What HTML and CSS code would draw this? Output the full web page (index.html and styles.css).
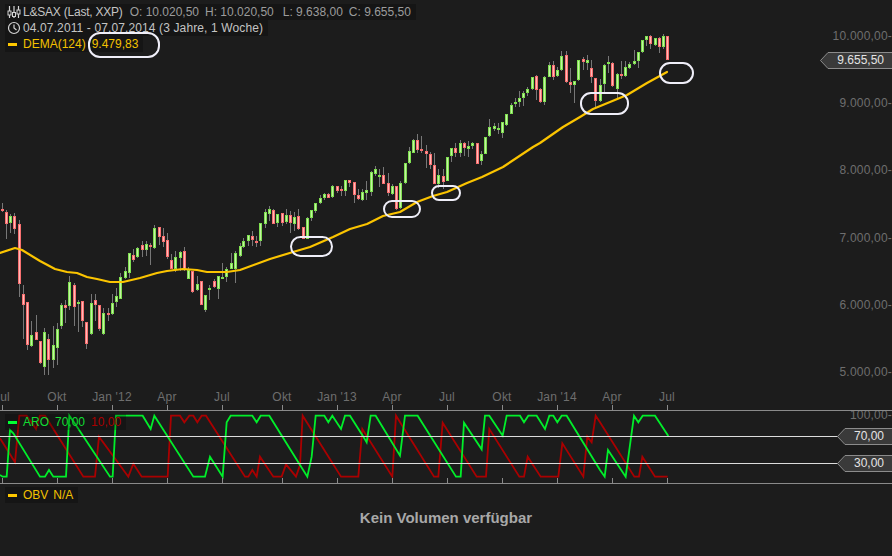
FILE: index.html
```html
<!DOCTYPE html>
<html lang="de">
<head>
  <meta charset="UTF-8">
  <meta name="viewport" content="width=device-width, initial-scale=1.0">
  <title>L&amp;SAX Chart</title>
  <link rel="stylesheet" href="styles.css">
</head>
<body>
  <div class="chart">
    <div class="pane pane-price">
      <div class="legend">
        <div class="legend-row">
          <svg class="legend-icon" viewBox="0 0 14 14">
            <path d="M2.5 1v12M7 1v12M11.5 1v12" class="icon-line"/>
            <rect x="1" y="6" width="3" height="4" class="icon-knob"/>
            <rect x="5.5" y="7.5" width="3" height="4" class="icon-knob"/>
            <rect x="10" y="5" width="3" height="4" class="icon-knob"/>
          </svg>
          <span class="legend-name">L&amp;SAX (Last, XXP)</span>
          <span class="ohlc">O: 10.020,50</span>
          <span class="ohlc">H: 10.020,50</span>
          <span class="ohlc ohlc-low">L: 9.638,00</span>
          <span class="ohlc">C: 9.655,50</span>
        </div>
        <div class="legend-row">
          <svg class="legend-icon" viewBox="0 0 14 14">
            <circle cx="7" cy="7" r="5.5" class="icon-line"/>
            <path d="M7 3.5V7l2.5 2" class="icon-line"/>
          </svg>
          <span class="legend-range">04.07.2011 - 07.07.2014 (3 Jahre, 1 Woche)</span>
        </div>
        <div class="legend-row yellow">
          <span class="dash dash-yellow"></span>
          <span>DEMA(124)</span>
          <span>9.479,83</span>
        </div>
      </div>
      <svg id="priceChart" class="plot" width="892" height="410"></svg>
    </div>
    <div class="pane pane-aro">
      <svg id="aroChart" class="plot" width="892" height="73"></svg>
      <div class="legend legend-aro">
        <div class="legend-row green">
          <span class="dash dash-green"></span>
          <span>ARO</span>
          <span>70,00</span>
          <span class="red">10,00</span>
        </div>
      </div>
    </div>
    <div class="pane pane-obv">
      <div class="legend legend-obv">
        <div class="legend-row tight yellow">
          <span class="dash dash-yellow"></span>
          <span>OBV</span>
          <span>N/A</span>
        </div>
      </div>
      <p class="no-volume">Kein Volumen verfügbar</p>
    </div>
  </div>
  <script src="chart.js"></script>
</body>
</html>
```

FILE: styles.css
```css
* {
  margin: 0;
  padding: 0;
  box-sizing: border-box;
}
body {
  width: 892px;
  height: 556px;
  overflow: hidden;
  background-color: #1c1c1c;
  font-family: "Liberation Sans", Arial, sans-serif;
  font-size: 12px;
}
.chart {
  display: flex;
  flex-direction: column;
}
.pane {
  position: relative;
}
.pane-price {
  height: 410px;
}
.pane-aro {
  height: 74px;
  border-top: 1px solid #8a8a8a;
  border-bottom: 1px solid #8a8a8a;
}
.pane-obv {
  height: 72px;
}
.plot {
  display: block;
  position: relative;
  z-index: 1;
}
.legend {
  position: absolute;
  left: 5px;
  top: 4px;
  display: flex;
  flex-direction: column;
  align-items: flex-start;
  z-index: 2;
  pointer-events: none;
}
.pane-price .legend {
  z-index: 0;
}
.legend-aro {
  top: 3px;
}
.legend-obv {
  top: 3px;
}
.legend-row {
  display: flex;
  align-items: center;
  gap: 6px;
  height: 16px;
  padding: 0 5px 0 2px;
  color: #c4c4c4;
  background-color: rgba(0, 0, 0, 0.22);
  white-space: nowrap;
}
.legend-row.tight {
  gap: 5px;
}
.tight .dash {
  margin-right: 1px;
}
.legend-icon {
  width: 14px;
  height: 14px;
  margin-right: -4px;
}
.icon-line {
  fill: none;
  stroke: #d4d4d4;
  stroke-width: 1.2;
}
.icon-knob {
  fill: #1c1c1c;
  stroke: #d4d4d4;
  stroke-width: 1;
}
.legend-name {
  letter-spacing: -0.22px;
  margin-right: 1px;
}
.legend-range {
  letter-spacing: 0.12px;
}
.ohlc {
  color: #9c9c9c;
}
.ohlc-low {
  margin-left: 3px;
}
.dash {
  width: 9px;
  height: 3px;
  margin: 0 0 0 1px;
}
.dash-yellow {
  background-color: #ffc800;
}
.dash-green {
  background-color: #00ff33;
}
.yellow {
  color: #f3c200;
}
.green {
  color: #11dd33;
}
.red {
  color: #aa0000;
}
.no-volume {
  padding-top: 25px;
  text-align: center;
  font-size: 15px;
  font-weight: bold;
  color: #a8a8a8;
}
.axis-label {
  font-size: 12px;
  letter-spacing: 0.2px;
  fill: #6e6e6e;
}
.tag-label {
  font-size: 12px;
  fill: #e4e4e4;
}
.tag {
  fill: #3a3a3a;
  stroke: #8c8c8c;
  stroke-width: 1;
}
.tick {
  stroke: #8a8a8a;
  stroke-width: 1;
}
.level {
  stroke: #dcdcdc;
  stroke-width: 1;
}
.wick {
  stroke: #777777;
  stroke-width: 1;
}
.body-up {
  fill: #c4f2a4;
  stroke: #7fe050;
  stroke-width: 1;
}
.body-down {
  fill: #ffb8b8;
  stroke: #f87070;
  stroke-width: 1;
}
.dema {
  fill: none;
  stroke: #fbc400;
  stroke-width: 2.2;
  stroke-linejoin: round;
  stroke-linecap: round;
}
.aro-up {
  fill: none;
  stroke: #00ee2a;
  stroke-width: 1.8;
}
.aro-down {
  fill: none;
  stroke: #aa0000;
  stroke-width: 1.8;
}
.oval {
  fill: none;
  stroke: #efeef8;
  stroke-width: 2;
}
```

FILE: chart.js
```js
const SVG_NS = 'http://www.w3.org/2000/svg';

// candles traced at 3x: [x, wickTop, wickBottom, bodyTop, bodyBottom, up?]
const section1 = { ox: 0, oy: 200, bars: [
  [7,10,36,28,30,0],[19,30,116,37,71,0],[31,42,98,48,68,1],[43,40,102,48,86,0],[58,60,292,72,251,0],
  [70,255,418,283,314,0],[82,305,449,307,434,0],[94,363,440,405,437,1],[109,345,420,396,419,0],[121,424,491,424,489,0],
  [133,385,524,397,500,1],[145,403,524,418,479,0],[160,378,503,436,479,1],[172,368,495,388,443,1],[184,308,386,316,377,1],
  [196,300,368,316,323,0],[208,228,330,247,317,1],[223,250,377,256,320,0],[235,300,395,307,311,1],[247,304,380,304,362,0],
  [259,366,446,366,431,0],[274,282,405,310,403,1],[286,282,362,301,314,0],[298,316,392,316,386,0],[310,325,404,340,401,1],
  [325,325,362,339,341,0],[337,282,344,310,341,1],[349,265,320,289,307,1],[361,220,298,232,296,1],[376,202,238,214,235,1],
  [388,160,234,160,220,1],[400,148,186,166,179,0],[412,142,174,145,172,1],[427,124,170,136,149,0],[439,124,168,133,149,1],
  [451,130,194,136,140,0],[463,75,146,85,143,1],[478,82,134,82,112,0],[490,84,140,109,125,0],[502,100,178,121,172,0],
  [514,163,208,181,206,0],[526,153,215,172,208,1],[541,153,213,157,173,1],[553,141,213,154,211,0],[565,200,238,211,236,1],
  [577,214,278,214,275,0],[592,228,272,253,269,1],[604,244,316,244,314,0],[616,286,335,286,329,1],[628,256,300,264,269,1],
  [643,236,265,244,262,0],[655,229,296,229,268,1],[667,190,236,232,236,1],[679,200,246,206,232,1],[694,160,208,190,206,1],
  [706,152,250,160,206,1]
] };
const section2 = { ox: 240, oy: 120, bars: [
  [0,370,410,378,408,1],[10,355,385,364,380,1],[25,346,378,346,364,1],[37,334,378,349,361,0],[49,349,380,363,365,0],
  [61,308,378,310,364,1],[76,268,323,277,311,1],[88,258,302,268,281,1],[100,268,312,271,311,0],[112,283,320,283,308,1],
  [127,278,317,280,310,0],[139,268,313,286,306,1],[151,272,338,286,308,0],[163,277,332,292,311,1],[175,267,330,289,326,0],
  [190,322,358,322,358,0],[202,290,358,295,358,1],[214,271,302,271,293,1],[226,250,280,250,274,1],[241,225,252,235,250,1],
  [253,220,240,223,235,1],[265,220,235,223,233,0],[277,196,234,199,232,1],[292,199,218,199,213,0],[304,197,228,208,212,0],
  [316,181,228,181,212,1],[328,181,200,181,188,0],[343,187,248,187,226,0],[355,208,240,226,238,0],[367,208,243,217,239,1],
  [379,184,240,211,220,1],[394,154,228,157,217,1],[406,139,168,148,161,1],[418,148,202,166,170,1],[430,142,193,166,191,0],
  [445,160,228,190,220,0],[457,193,225,199,223,1],[469,199,270,199,266,0],[481,184,266,190,264,1],[496,130,192,130,190,1],
  [508,82,132,94,130,1],[520,58,100,61,98,1],[532,43,100,61,90,0],[544,48,98,88,94,0],[559,76,145,94,103,0],
  [571,97,148,103,136,0],[583,100,192,136,191,0],[595,148,205,166,191,1],[610,148,208,169,185,0],[622,110,184,112,182,1],
  [634,85,125,85,107,1],[646,70,112,85,98,0],[661,61,112,70,98,1],[673,67,108,70,85,0],[685,64,110,79,86,1],
  [697,65,88,70,79,1]
] };
const section3 = { ox: 470, oy: 20, bars: [
  [22,370,433,370,433,0],[34,394,434,403,422,1],[46,352,403,352,401,1],[58,297,350,322,347,1],[73,310,332,319,326,1],
  [85,310,342,324,326,1],[97,307,354,307,338,1],[109,283,318,283,316,1],[124,250,283,256,281,1],[136,235,262,246,248,1],
  [148,212,262,235,247,1],[160,212,258,220,233,1],[172,200,228,208,220,1],[187,170,210,172,208,1],[199,166,240,169,211,0],
  [211,205,250,208,247,0],[223,169,254,172,247,1],[238,127,172,136,170,1],[250,124,180,136,170,0],[262,142,172,151,169,1],
  [274,94,154,109,151,1],[289,94,188,106,187,0],[301,145,220,187,196,0],[313,182,250,184,196,1],[325,119,184,121,181,1],
  [340,112,150,118,127,0],[352,106,150,121,130,1],[364,121,188,145,172,0],[376,175,262,175,244,0],[391,178,246,196,244,1],
  [403,133,220,136,193,1],[415,109,160,127,133,1],[427,127,200,130,199,0],[442,160,235,163,208,1],[454,124,178,163,169,0],
  [466,124,172,142,169,1],[478,127,148,133,145,1],[493,90,136,124,133,1],[505,97,144,97,124,1],[517,60,99,61,97,1],
  [529,47,78,49,61,1],[541,45,86,49,73,0],[556,55,78,55,76,1],[568,50,98,55,82,0],[580,43,86,49,82,1],
  [592,49,121,49,121,0]
] };

const demaPoints = [
  [0,253],[15,248],[22,250],[40,261],[55,269],[67,272],[77,273],[87,277],[97,279],[110,282],[123,282],[140,278],
  [157,273],[167,271],[183,269],[197,270],[207,272],[227,272],[240,270],[270,259],[293,252],[310,247],[333,237],
  [350,229],[367,224],[383,216],[400,212],[417,202],[433,196],[447,192],[467,183],[482,177],[503,167],[533,147],
  [540,143],[563,127],[580,117],[593,109],[610,102],[627,95],[647,83],[667,72]
];

const ovals = [
  [89,33,70,24,11],[291,237,41,19,9.5],[384,201,36,16,8],[432,186,28,14,7],[581,93,47,21,10],[660,63,33,20,10]
];

const priceLabels = [['10.000,00-',36],['9.000,00-',103],['8.000,00-',170],['7.000,00-',238],['6.000,00-',305],['5.000,00-',372]];
const timeLabels = [['Jul',2],['Okt',57],["Jan '12",112],['Apr',167],['Jul',222],['Okt',282],["Jan '13",337],['Apr',392],['Jul',447],['Okt',502],["Jan '14",557],['Apr',612],['Jul',667]];

// aroon lines, also traced at 3x with the pane's y origin at 385
const aroUp = [
  [0,270],[8,275],[20,275],[30,135],[40,145],[120,275],[135,275],[147,255],[160,275],[198,275],[208,92],[222,112],[330,275],[338,275],[348,92],
  [428,92],[452,132],[463,92],[580,275],[615,275],[630,215],[668,275],[680,112],[692,92],[757,92],[770,112],[782,92],[808,92],[900,240],
  [922,275],[935,215],[947,92],[973,92],[985,112],[997,92],[1023,132],[1035,92],[1050,92],[1090,155],[1100,172],[1112,92],[1127,92],[1200,212],
  [1215,92],[1253,92],[1368,275],[1382,275],[1392,113],[1445,193],[1455,92],[1468,92],[1508,152],[1520,92],[1560,92],[1572,112],[1585,92],
  [1610,92],[1635,132],[1648,92],[1660,92],[1672,112],[1685,92],[1700,92],[1800,255],[1814,275],[1824,195],[1877,275],[1902,92],[1915,112],
  [1928,92],[1965,92],[2005,153]
];
const aroDown = [
  [0,160],[45,232],[58,92],[80,92],[108,132],[120,92],[135,92],[250,275],[285,275],[297,155],[385,275],[400,236],[425,275],[503,275],[513,92],
  [540,92],[553,112],[568,92],[580,92],[592,112],[605,92],[618,92],[735,275],[745,275],[757,255],[770,275],[780,215],[820,275],[845,275],
  [858,238],[888,275],[900,240],[908,92],[1023,275],[1075,275],[1087,132],[1177,275],[1188,92],[1302,275],[1315,275],[1328,113],[1430,275],
  [1458,275],[1468,132],[1558,275],[1572,275],[1583,215],[1622,275],[1675,275],[1687,175],[1750,275],[1762,155],[1775,172],[1787,92],[1800,112],
  [1903,275],[1917,275],[1927,215],[1965,275],[2003,275]
];

function add(svg, tag, attrs, text) {
  const el = document.createElementNS(SVG_NS, tag);
  for (const key in attrs) el.setAttribute(key, attrs[key]);
  if (text) el.textContent = text;
  svg.appendChild(el);
  return el;
}

function drawSection(svg, section) {
  section.bars.forEach(function (b) {
    const x = Math.floor(section.ox + b[0] / 3);
    const y = function (v) { return Math.round(section.oy + v / 3); };
    add(svg, 'line', { class: 'wick', x1: x + 0.5, x2: x + 0.5, y1: y(b[1]), y2: y(b[2]) });
    add(svg, 'rect', {
      class: b[5] ? 'body-up' : 'body-down',
      x: x - 0.5,
      y: y(b[3]) + 0.5,
      width: 2,
      height: Math.max(y(b[4]) - y(b[3]) - 1, 1)
    });
  });
}

function drawTag(svg, left, cy, label) {
  const top = cy - 8;
  const bottom = cy + 8;
  add(svg, 'path', { class: 'tag', d: `M892 ${top + 0.5}H${left + 8}L${left + 0.5} ${cy + 0.5}L${left + 8} ${bottom + 0.5}H892` });
  add(svg, 'text', { class: 'tag-label', x: 884, y: cy + 4, 'text-anchor': 'end' }, label);
}

const priceChart = document.getElementById('priceChart');
[section1, section2, section3].forEach(function (s) { drawSection(priceChart, s); });
add(priceChart, 'polyline', { class: 'dema', points: demaPoints.join(' ') });

priceLabels.forEach(function (l) {
  add(priceChart, 'text', { class: 'axis-label', x: 892, y: l[1] + 4, 'text-anchor': 'end' }, l[0]);
});
timeLabels.forEach(function (l) {
  add(priceChart, 'text', { class: 'axis-label', x: l[1], y: 401, 'text-anchor': 'middle' }, l[0]);
  add(priceChart, 'line', { class: 'tick', x1: l[1] + 0.5, x2: l[1] + 0.5, y1: 405, y2: 410 });
});
drawTag(priceChart, 820, 60, '9.655,50');

ovals.forEach(function (o) {
  add(priceChart, 'rect', { class: 'oval', x: o[0], y: o[1], width: o[2], height: o[3], rx: o[4], ry: o[4] });
});

// aroon pane starts at y=411 on the page
const aroChart = document.getElementById('aroChart');
const aroY = function (v) { return 385 + v / 3 - 411; };
const linePoints = function (pts) {
  return pts.map(function (p) { return (p[0] / 3) + ',' + aroY(p[1]); }).join(' ');
};
add(aroChart, 'polyline', { class: 'aro-down', points: linePoints(aroDown) });
add(aroChart, 'polyline', { class: 'aro-up', points: linePoints(aroUp) });
[25.5, 52.5].forEach(function (y) {
  add(aroChart, 'line', { class: 'level', x1: 0, x2: 838, y1: y, y2: y });
});
timeLabels.forEach(function (l) {
  add(aroChart, 'line', { class: 'tick', x1: l[1] + 0.5, x2: l[1] + 0.5, y1: 67, y2: 72 });
});
add(aroChart, 'text', { class: 'axis-label', x: 892, y: 8, 'text-anchor': 'end' }, '100,00-');
drawTag(aroChart, 837, 25, '70,00');
drawTag(aroChart, 837, 52, '30,00');
```
